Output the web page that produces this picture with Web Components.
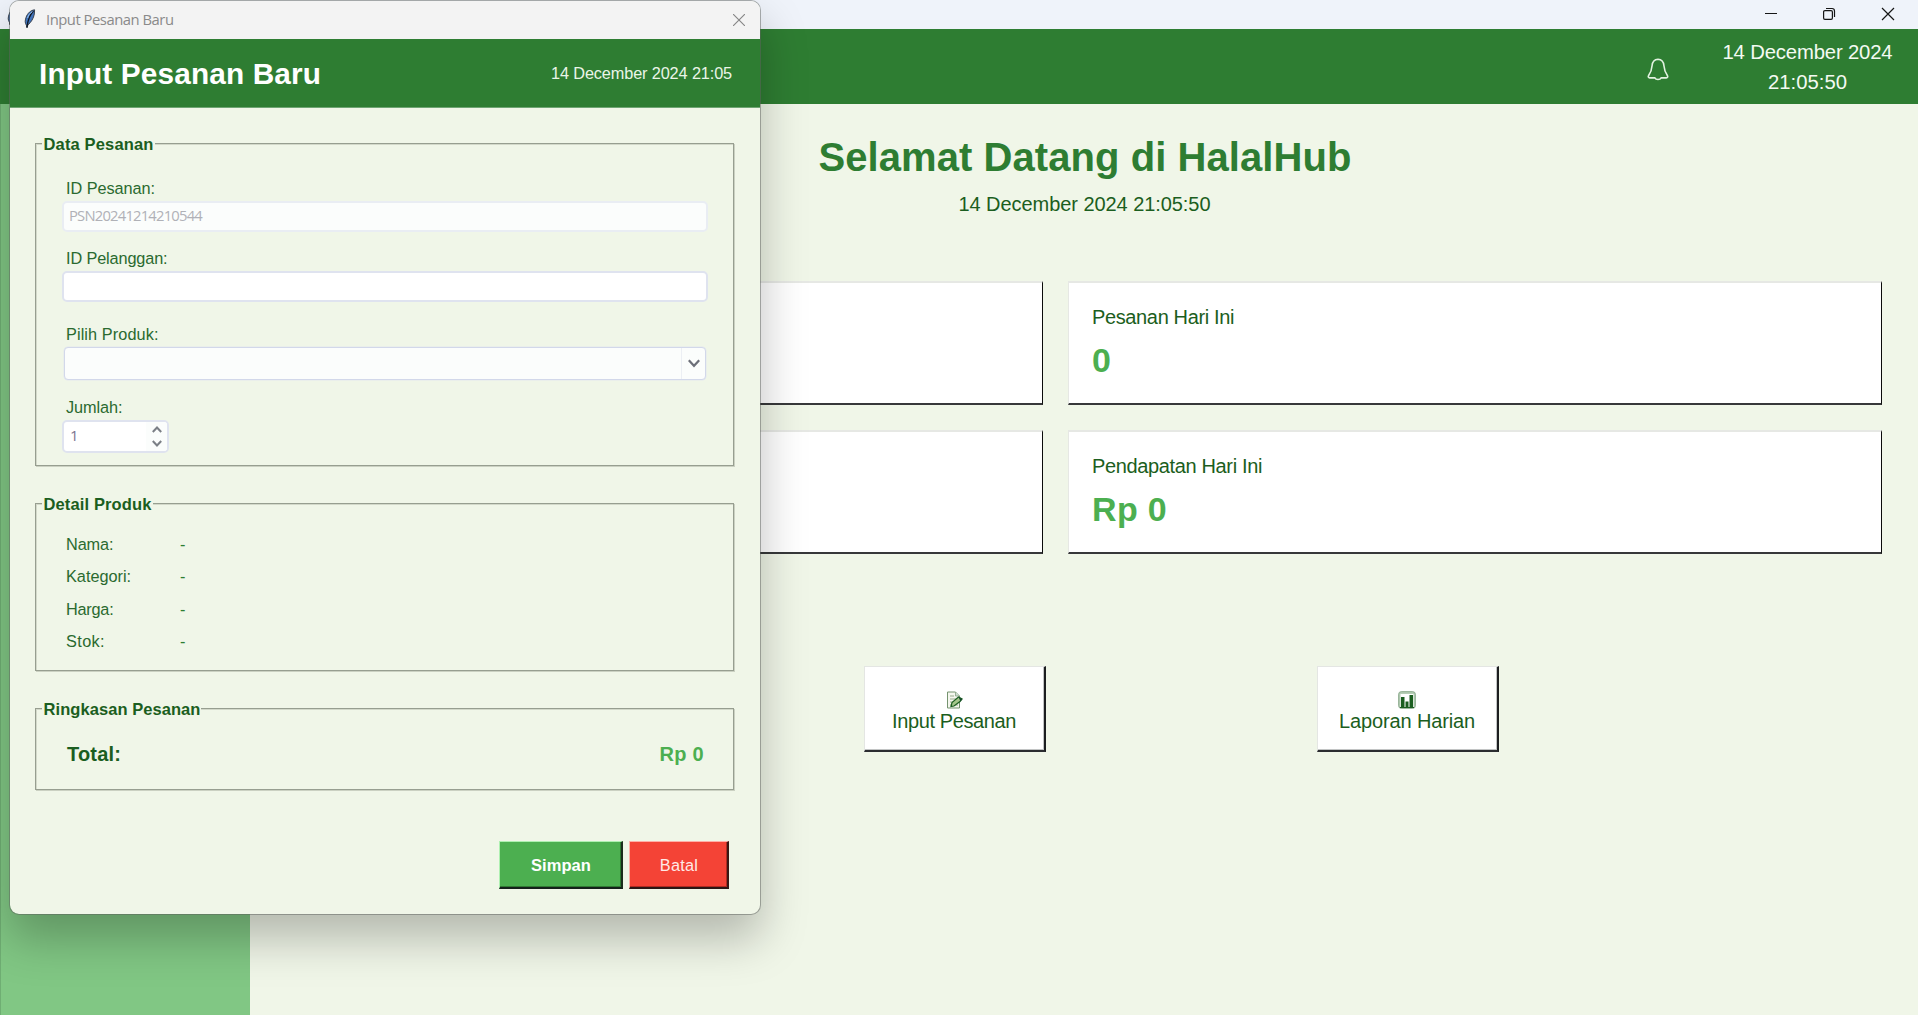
<!DOCTYPE html>
<html lang="id">
<head>
<meta charset="utf-8">
<title>HalalHub</title>
<style>
html,body{margin:0;height:100%;overflow:hidden}
body{font-family:"Liberation Sans",Arial,sans-serif;background:#f0f6e8}
</style>
</head>
<body>
<halal-app></halal-app>
<script>
const make = (name, html, ready) => customElements.define(name, class extends HTMLElement {
  connectedCallback() {
    if (this.shadowRoot) return;
    const root = this.attachShadow({mode: 'open'});
    root.innerHTML = typeof html === 'function' ? html(this) : html;
    if (ready) ready(this, root);
  }
});

/* Label whose tracking is adjusted so the text takes the given width. */
make('ui-label', `<style>:host{display:block;white-space:nowrap}span{display:inline-block}</style><span><slot></slot></span>`,
  (host, root) => {
    const w = parseFloat(host.getAttribute('w'));
    if (!w) return;
    const span = root.querySelector('span');
    const n = host.textContent.length;
    const natural = span.getBoundingClientRect().width;
    const ls = (w - natural) / n;
    span.style.letterSpacing = ls.toFixed(3) + 'px';
  });

make('feather-icon', `<style>:host{display:block;width:12px;height:20px}svg{display:block}</style>
<svg width="12" height="20" viewBox="0 0 12 20"><path d="M10.6.8C7 1.200 3.500 4 2 8.500.9 12 .9 14 2.400 16.200L3 19l.8-3C7 13.500 9.800 9 10.300 5Z" fill="#3f74bd" stroke="#3a424e" stroke-width="1"/><path d="M9.500 2C6 5.500 4 9.500 3 18" fill="none" stroke="#101722" stroke-width="1.300"/><path d="M8.500 2.600C6 4 4.200 6.500 3.600 9" fill="none" stroke="#9cc4f2" stroke-width="1"/></svg>`);

make('win-bar', `<style>
:host{display:flex;height:29px;background:#eff3fa;align-items:flex-start;justify-content:space-between;flex:none}
feather-icon{margin:6px 0 0 7px}
.ctl{display:flex;gap:47px;padding:8px 24px 0 0;}
.ctl svg{display:block;width:12px;height:12px;fill:none;stroke:#161616;stroke-width:1.200;overflow:visible}
.ctl svg:first-child{margin-right:-1px}
</style><feather-icon></feather-icon><div class="ctl">
<svg viewBox="0 0 12 12"><path d="M0 5.500h12" stroke-width="1"/></svg>
<svg viewBox="0 0 12 12"><rect x=".6" y="2.600" width="8.800" height="8.800" rx="1.300"/><path d="M3 .5h6a2.500 2.500 0 0 1 2.500 2.500v6"/></svg>
<svg viewBox="0 0 12 12"><path d="M0 0l12 12M12 0L0 12"/></svg></div>`);

make('app-header', `<style>
:host{display:flex;height:75px;flex:none;background:#2e7d32;color:#fff;justify-content:flex-end;box-sizing:border-box}
svg{display:block;margin:29px 53px 0 0}
.clock{width:171px;margin-right:25px;padding-top:8px;font-size:20.300px;line-height:30px;display:flex;flex-direction:column;align-items:center;color:#f4faf2}
</style>
<svg width="22" height="23" viewBox="0 0 22 23" fill="none" stroke="#e3f2e1" stroke-width="1.600"><path d="M11 1.200c-3.800.2-5.600 3-5.900 6.300C4.800 12 3.800 14.500 1.500 17.800c-.6 1 0 2.100 1.100 2.100h5.200c1.200 2.200 5.200 2.200 6.400 0h5.200c1.100 0 1.700-1.100 1.100-2.100C18.200 14.500 17.200 12 16.900 7.500 16.600 4.200 14.800 1.400 11 1.200Z"/></svg>
<div class="clock"><ui-label w="170">14 December 2024</ui-label><ui-label w="79">21:05:50</ui-label></div>`);

make('stat-card', `<style>
:host{display:block;box-sizing:border-box;height:124px;background:#fff;border:1px solid #e6e8e4;border-top-width:2px;border-right:1px solid #0b0b0b;border-bottom:2px solid #37383a;padding:21px 23px;color:#1b5e20;font-size:20px;line-height:26px}
.v{font-size:34px;font-weight:bold;color:#4caf50;line-height:38px;margin-top:11px}
</style><slot name="label"></slot><div class="v"><slot></slot></div>`);

make('tile-button', `<style>
:host{display:flex;flex-direction:column;align-items:center;box-sizing:border-box;width:182px;height:86px;background:#fff;border:1px solid #e4e6e3;border-right:2px solid #1c1e20;border-bottom:2px solid #2b2d30;box-shadow:inset -1px -1px 0 #c2c4c4;color:#1b5e20;font-size:20px;line-height:22px;padding:24px 1px 0 0}
::slotted(svg){display:block;margin-bottom:1px}
</style><slot name="icon"></slot><slot></slot>`);

make('app-main', `<style>
:host{display:flex;flex:1;min-height:0;background:#f0f6e8}
aside{width:250px;background:#81c784;border-left:1px solid #6fae73;box-sizing:border-box}
main{flex:1;display:flex;flex-direction:column;align-items:stretch}
h1{margin:29px 0 0;font-size:40px;line-height:48px;color:#2e7d32;display:flex;justify-content:center;font-weight:bold;padding-left:2px}
.date{margin-top:11px;font-size:20px;line-height:24px;color:#1b5e20;display:flex;justify-content:center;padding-left:1px}
.cards{margin:65px 35px 0 35px;display:grid;grid-template-columns:758px 814px;column-gap:25px;row-gap:25px}
.tiles{display:flex;gap:271px;margin:112px 0 0 614px}
</style>
<aside></aside><main>
<h1><ui-label w="533">Selamat Datang di HalalHub</ui-label></h1>
<div class="date"><ui-label w="252">14 December 2024 21:05:50</ui-label></div>
<div class="cards">
<stat-card></stat-card>
<stat-card><ui-label slot="label" w="142">Pesanan Hari Ini</ui-label>0</stat-card>
<stat-card></stat-card>
<stat-card><ui-label slot="label" w="170">Pendapatan Hari Ini</ui-label><ui-label w="75">Rp 0</ui-label></stat-card>
</div>
<div class="tiles">
<tile-button><svg slot="icon" width="18" height="18" viewBox="0 0 18 18"><path d="M2.500 1h8l4 4v12h-12Z" fill="#f4f6ee" stroke="#75936f"/><path d="M10.500 1v4h4" fill="#cddbd0" stroke="#86a183" stroke-width=".8"/><path d="M5 5h4M5 8h6M5 11h3M5 14h8" stroke="#98aa8c"/><path d="M6 15.500l1-4 6.500-5.500 3.500 2-2 2.500-6 4.500Z" fill="#a4c58a" stroke="#1b5e20" stroke-width="1.200"/><path d="M13.500 6l4 2-2 2.500Z" fill="#174e2a"/></svg><ui-label w="124">Input Pesanan</ui-label></tile-button>
<tile-button><svg slot="icon" width="18" height="18" viewBox="0 0 18 18"><rect x=".7" y=".7" width="16.600" height="16.600" rx="2.500" fill="#b6cdb6" stroke="#89a98b"/><rect x="2.500" y="3" width="13" height="13.500" fill="#fff"/><path d="M3 6h3.500v11H3ZM7.500 10.500h3v6.500h-3ZM11.500 4H15v13h-3.500Z" fill="#1b5e20"/><path d="M2 16.500h14" stroke="#1b5e20"/></svg><ui-label w="136">Laporan Harian</ui-label></tile-button>
</div></main>`);

make('group-box', h => `<style>
:host{display:block;box-sizing:border-box;border:1px solid #979e90;box-shadow:inset 1px 1px 0 #d3d9ca,1px 1px 0 #cbd1c2}
.lg{display:flex;margin:-9px 0 0 6px}
.lg ui-label{background:#f0f6e8;padding:0 1px 0 1.500px;font-size:16.500px;font-weight:bold;line-height:18px;color:#1b5e20}
</style><div class="lg"><ui-label w="${h.getAttribute('lw')}">${h.getAttribute('legend')}</ui-label></div><slot></slot>`);

make('form-field', h => `<style>
:host{display:block;padding-right:27px}
ui-label{font-size:16.300px;line-height:20px;margin:0 0 3px 30px;color:#2a6a2f}
</style><ui-label w="${h.getAttribute('lw')}">${h.getAttribute('label')}</ui-label><slot></slot>`);

make('text-entry', `<style>
:host{display:flex;align-items:center;box-sizing:border-box;height:31px;margin-left:26px;margin-right:-2px;background:#fff;border:2px solid #dfe3ef;border-radius:5px;padding:0 0 3px 5px;font:14.800px "Open Sans","Noto Sans",sans-serif;color:#b0b1b7}
:host([disabled]){background:#fbfdfc;border-color:#e9edf3}
</style><slot></slot>`);

make('combo-entry', `<style>
:host{display:flex;justify-content:flex-end;box-sizing:border-box;height:33px;margin-left:28px;background:#fbfdfc;border:1px solid #d2d8ea;border-radius:4px;box-shadow:0 0 0 .5px #e3e7ee}
div{width:23px;border-left:1px solid #eceff4;display:flex;align-items:center;justify-content:center}
</style><div><svg width="12" height="9" viewBox="0 0 12 9" fill="none" stroke="#6c6f78" stroke-width="2.200"><path d="M.8 1.300L6 6.800l5.200-5.500"/></svg></div>`);

make('spin-entry', `<style>
:host{display:flex;box-sizing:border-box;width:107px;height:33px;margin-left:26px;background:#fff;border:2px solid #dfe3ef;border-radius:5px;padding-left:6px;font:15px/27px "Open Sans","Noto Sans",sans-serif;color:#7d7490;justify-content:space-between}
div{width:21px;background:#fbfdfc;display:flex;flex-direction:column;gap:7px;padding-top:4px;align-items:center;border-radius:0 3px 3px 0}
svg{display:block}
</style><slot></slot><div><svg width="10" height="7" viewBox="0 0 10 7" fill="none" stroke="#7b7f86" stroke-width="2"><path d="M.8 6L5 1.500 9.200 6"/></svg><svg width="10" height="7" viewBox="0 0 10 7" fill="none" stroke="#7b7f86" stroke-width="2"><path d="M.8 1L5 5.500 9.200 1"/></svg></div>`);

make('detail-row', h => `<style>
:host{display:flex;font-size:16.300px;line-height:20px;height:32.500px;color:#2a6a2f;padding-left:30px}
.k{width:114px}.v{color:#2e7d32}
</style><div class="k"><ui-label w="${h.getAttribute('lw')}">${h.getAttribute('label')}</ui-label></div><div class="v"><slot></slot></div>`);

make('action-button', `<style>
:host{display:flex;align-items:center;justify-content:center;box-sizing:border-box;height:48px;color:#fff;font-size:16.500px;background:#4caf50;border:1px solid #aef0b1;border-right:2px solid #1c2e1d;border-bottom:2px solid #14201a;box-shadow:inset -1px -1px 0 #2f7a33;width:124px;padding:2px 0 0 1px}
:host([danger]){background:#f44336;border-color:#ffb0a8 #3a1714 #2a1614 #ffb0a8;box-shadow:inset -1px -1px 0 #b02a20;width:100px;font-size:16.300px;color:#ffe9e6}
:host(:not([danger])){font-weight:bold}
</style><slot></slot>`);

make('order-dialog', `<style>
:host{display:flex;flex-direction:column;box-sizing:border-box;width:752px;height:915px;background:#f0f6e8;background-clip:padding-box;border:1px solid rgba(95,100,96,.5);border-radius:10px;overflow:hidden;box-shadow:0 24px 46px rgba(0,0,0,.25)}
.tb{display:flex;height:38px;background:#f3f3f3;flex:none}
.tb feather-icon{margin:8px 0 0 14px}
.tb ui-label{flex:1;margin-left:10px;font:14.800px/36px "Open Sans","Noto Sans",sans-serif;color:#8a8a8a}
.tb svg{margin:13px 15px 0 0}
.hd{display:flex;height:68px;flex:none;background:#2e7d32;border-bottom:1px solid #6fa573;justify-content:space-between;align-items:center;padding:0 28px 0 29px;color:#fff}
.hd .a{font-size:29.800px;font-weight:bold;margin-top:1px}
.hd .b{font-size:16.300px;color:#eaf5e8;margin-top:1px}
.body{padding:35px 26px 0 25px;display:flex;flex-direction:column}
.total{display:flex;justify-content:space-between;padding:24px 29px 0 31px;font-size:20px;line-height:24px;font-weight:bold;color:#1b5e20}
.total .r{color:#4caf50}
.btns{display:flex;gap:6px;justify-content:flex-end;margin-top:51px;padding-right:5px}
</style>
<div class="tb"><feather-icon></feather-icon><ui-label w="127.500">Input Pesanan Baru</ui-label><svg width="12" height="12" viewBox="0 0 12 12" stroke="#858585" stroke-width="1.100"><path d="M0 0l12 12M12 0L0 12"/></svg></div>
<div class="hd"><ui-label class="a" w="282">Input Pesanan Baru</ui-label><ui-label class="b" w="181">14 December 2024 21:05</ui-label></div>
<div class="body">
<group-box legend="Data Pesanan" lw="110" style="height:323px">
<form-field label="ID Pesanan:" lw="89" style="margin-top:25px"><text-entry disabled><ui-label w="133">PSN20241214210544</ui-label></text-entry></form-field>
<form-field label="ID Pelanggan:" lw="101.500" style="margin-top:16px"><text-entry></text-entry></form-field>
<form-field label="Pilih Produk:" lw="92.500" style="margin-top:22px"><combo-entry></combo-entry></form-field>
<form-field label="Jumlah:" lw="56.500" style="margin-top:17px"><spin-entry>1</spin-entry></form-field>
</group-box>
<group-box legend="Detail Produk" lw="108" style="height:168px;margin-top:37px">
<detail-row label="Nama:" lw="47.500" style="margin-top:20.500px">-</detail-row>
<detail-row label="Kategori:" lw="65">-</detail-row>
<detail-row label="Harga:" lw="47.500">-</detail-row>
<detail-row label="Stok:" lw="39">-</detail-row>
</group-box>
<group-box legend="Ringkasan Pesanan" lw="157" style="height:82px;margin-top:37px">
<div class="total"><ui-label w="54">Total:</ui-label><ui-label class="r" w="44.500">Rp 0</ui-label></div>
</group-box>
<div class="btns"><action-button><ui-label w="60">Simpan</ui-label></action-button><action-button danger><ui-label w="38.500">Batal</ui-label></action-button></div>
</div>`);

make('halal-app', `<style>
:host{display:flex;flex-direction:column;width:1918px;height:1015px;overflow:hidden;position:relative}
order-dialog{position:absolute;left:9px;top:0}
</style><win-bar></win-bar><app-header></app-header><app-main></app-main><order-dialog></order-dialog>`);
</script>
</body>
</html>
